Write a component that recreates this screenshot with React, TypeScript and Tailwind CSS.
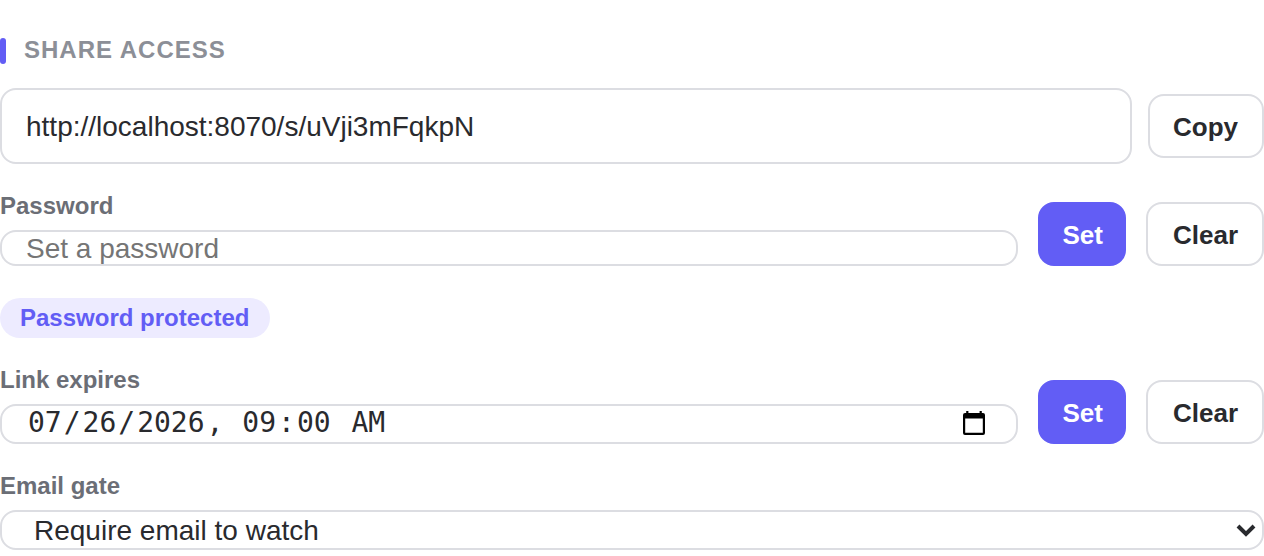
import React from 'react';
import clsx from 'clsx';

interface ButtonProps {
  children: React.ReactNode;
  variant?: 'primary' | 'outline';
  className?: string;
}

const Button: React.FC<ButtonProps> = ({ children, variant = 'outline', className }) => (
  <button
    className={clsx(
      'flex h-16 shrink-0 items-center rounded-2xl border-2 pt-0.5 text-[26px] leading-[30px] font-bold',
      variant === 'primary'
        ? 'border-[#625df5] bg-[#625df5] text-white'
        : 'border-[#dcdde2] bg-white text-[#292a2e]',
      className
    )}
  >
    {children}
  </button>
);

const Label: React.FC<{ children: React.ReactNode }> = ({ children }) => (
  <div className="mb-2.5 h-7 text-2xl leading-7 font-bold text-[#6b6e76]">{children}</div>
);

interface FieldRowProps {
  label: string;
  children: React.ReactNode;
}

const FieldRow: React.FC<FieldRowProps> = ({ label, children }) => (
  <div className="flex items-end gap-5">
    <div className="min-w-0 flex-1">
      <Label>{label}</Label>
      {children}
    </div>
    <Button variant="primary" className="w-[88px] pl-[22.5px]">Set</Button>
    <Button className="w-[118px] pl-[25px]">Clear</Button>
  </div>
);

// Each editable part of the date carries its own small padding
const dateParts = [
  { value: '07', after: '/' },
  { value: '26', after: '/' },
  { value: '2026', after: ', ' },
  { value: '09', after: ':' },
  { value: '00', after: ' ' },
  { value: 'AM', after: '' },
];

const CalendarIcon = () => (
  <svg className="mb-0.5" width="24" height="26" viewBox="0 0 24 26" fill="none">
    <path d="M4.2 .9h2.2v3H4.2zM17.6 .9h2.2v3h-2.2z" fill="#000" />
    <path d="M3 3h18a2 2 0 0 1 2 2v18a2 2 0 0 1-2 2H3a2 2 0 0 1-2-2V5a2 2 0 0 1 2-2zM3.2 8.6v14.2h17.6V8.6z" fill="#000" fillRule="evenodd" />
  </svg>
);

const ChevronIcon = () => (
  <svg width="20" height="14" viewBox="0 0 20 14" fill="none">
    <path d="M2 3l8 8 8-8" stroke="#292a2e" strokeWidth="4" />
  </svg>
);

const App: React.FC = () => {
  return (
    <div className="h-[556px] w-full overflow-hidden bg-white pt-9 font-['Liberation_Sans',Arial,sans-serif] text-[#292a2e]">
      <div className="flex h-7 items-center gap-[18px]">
        <span className="mt-0.5 h-[26px] w-1.5 rounded-[3px] bg-[#625df5]" />
        <h2 className="text-2xl leading-7 font-bold tracking-[1px] text-[#8c8f97]">SHARE ACCESS</h2>
      </div>

      <div className="mt-6 flex items-center gap-4">
        <div className="flex h-[76px] flex-1 items-center rounded-2xl border-2 border-[#dcdde2] bg-white px-6 pt-0.5 text-[28px] leading-8">
          http://localhost:8070/s/uVji3mFqkpN
        </div>
        <Button className="w-[116px] pl-[23px]">Copy</Button>
      </div>

      <div className="mt-7">
        <FieldRow label="Password">
          <div className="flex h-9 items-center rounded-2xl border-2 border-[#dcdde2] bg-white px-6 pt-0.5 text-[28px] leading-8 text-[#757575]">
            Set a password
          </div>
        </FieldRow>
      </div>

      <div className="mt-8 flex h-10 w-[270px] items-center rounded-full bg-[#edebff] px-5 text-2xl leading-7 font-bold whitespace-nowrap text-[#625df5]">
        Password protected
      </div>

      <div className="mt-7">
        <FieldRow label="Link expires">
          <div className="flex h-10 items-center justify-between rounded-2xl border-2 border-[#dcdde2] bg-white pr-[30px] pl-6">
            <div className="pb-0.5 font-['DejaVu_Sans_Mono',monospace] text-[28px] leading-8 whitespace-pre">
              {dateParts.map((part) => (
                <React.Fragment key={part.value}>
                  <span className="px-0.5">{part.value}</span>
                  {part.after}
                </React.Fragment>
              ))}
            </div>
            <CalendarIcon />
          </div>
        </FieldRow>
      </div>

      <div className="mt-7">
        <Label>Email gate</Label>
        <div className="flex h-10 items-center justify-between rounded-2xl border-2 border-[#dcdde2] bg-white pr-1.5 pl-8 text-[28px] leading-8">
          <span className="pt-0.5">Require email to watch</span>
          <ChevronIcon />
        </div>
      </div>
    </div>
  );
};

export default App;
